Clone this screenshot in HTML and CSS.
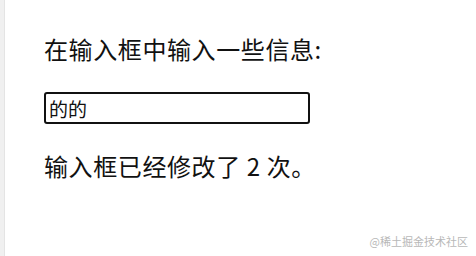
FILE: index.html
```html
<!DOCTYPE html>
<html lang="zh">
<head>
<meta charset="utf-8">
<link rel="stylesheet" href="styles.css">
</head>
<body>
<div class="page">
  <div class="stripe"></div>
  <main class="content">
    <p class="line">在输入框中输入一些信息:</p>
    <input class="field" type="text" value="的的">
    <p class="line">输入框已经修改了 2 次。</p>
  </main>
  <div class="watermark">@稀土掘金技术社区</div>
</div>
</body>
</html>
```
FILE: styles.css
```css
html, body {
  margin: 0;
  padding: 0;
  background: #fff;
}
.page {
  position: relative;
  display: flex;
  width: 476px;
  height: 256px;
  overflow: hidden;
  font-family: "Noto Sans CJK SC", "Noto Sans", sans-serif;
  color: #111;
}
.stripe {
  width: 4px;
  background: #f0f0f0;
  border-right: 1px solid #e4e4e4;
  flex-shrink: 0;
}
.content {
  padding: 31px 0 0 39px;
  display: flex;
  flex-direction: column;
  align-items: flex-start;
}
.line {
  margin: 0;
  font-size: 24px;
  line-height: 36px;
  letter-spacing: 0.6px;
}
.field {
  margin: 25px 0 24px 0;
  box-sizing: border-box;
  width: 266px;
  height: 32px;
  border: 2px solid #111;
  border-radius: 3px;
  padding: 0 3px;
  font-family: "Noto Sans CJK SC", sans-serif;
  font-size: 19px;
  color: #111;
  outline: none;
}
.watermark {
  position: absolute;
  right: 8px;
  bottom: 8px;
  font-size: 11px;
  line-height: 14px;
  color: #b8b8b8;
}
```
